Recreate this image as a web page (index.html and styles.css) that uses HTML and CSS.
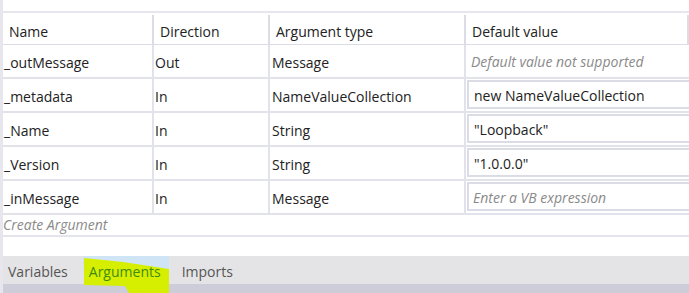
FILE: index.html
```html
<!DOCTYPE html>
<html lang="en">
<head>
  <meta charset="UTF-8">
  <title>Arguments</title>
  <link rel="stylesheet" href="styles.css">
</head>
<body>
  <div class="args-panel">
    <div class="args-top"></div>
    <div class="args-grid">
      <div class="args-head">Name</div>
      <div class="args-head">Direction</div>
      <div class="args-head">Argument type</div>
      <div class="args-head">Default value</div>

      <div class="args-cell">_outMessage</div>
      <div class="args-cell">Out</div>
      <div class="args-cell">Message</div>
      <div class="args-cell args-default"><span class="args-hint">Default value not supported</span></div>

      <div class="args-cell">_metadata</div>
      <div class="args-cell">In</div>
      <div class="args-cell">NameValueCollection</div>
      <div class="args-cell args-default"><div class="args-input">new NameValueCollection</div></div>

      <div class="args-cell">_Name</div>
      <div class="args-cell">In</div>
      <div class="args-cell">String</div>
      <div class="args-cell args-default"><div class="args-input">"Loopback"</div></div>

      <div class="args-cell">_Version</div>
      <div class="args-cell">In</div>
      <div class="args-cell">String</div>
      <div class="args-cell args-default"><div class="args-input">"1.0.0.0"</div></div>

      <div class="args-cell">_inMessage</div>
      <div class="args-cell">In</div>
      <div class="args-cell">Message</div>
      <div class="args-cell args-default"><div class="args-input args-hint">Enter a VB expression</div></div>
    </div>
    <div class="args-create">Create Argument</div>
    <div class="args-space"></div>
    <div class="args-tabs">
      <div class="args-tab">Variables</div>
      <div class="args-tab args-tab-active">
        <svg class="args-marker" width="90" height="37" viewBox="0 0 90 37">
          <rect x="0" y="0" width="86" height="14" fill="#cfe5f6"/>
          <polygon points="1,2 40,6 86,13 86,37 46,37 42,30 1,29" fill="#d6ee00"/>
        </svg>
        <span>Arguments</span>
      </div>
      <div class="args-tab">Imports</div>
    </div>
  </div>
</body>
</html>
```

FILE: styles.css
```css
body {
  margin: 0;
  background-color: #ffffff;
  font-family: "Open Sans", "Noto Sans", sans-serif;
  font-size: 14px;
  color: #333;
}

.args-panel {
  width: 689px;
  height: 293px;
  overflow: hidden;
  border-left: 3px solid #e6e6ec;
  box-sizing: border-box;
  display: flex;
  flex-direction: column;
}

.args-top {
  height: 11px;
  border-bottom: 2px solid #e6e6ee;
  margin-bottom: 2px;
  flex-shrink: 0;
}

.args-grid {
  display: grid;
  grid-template-columns: 151px 116px 196px 1fr;
  grid-template-rows: 30px repeat(5, 34px);
}

.args-head {
  display: flex;
  align-items: center;
  padding-left: 6px;
  padding-top: 3px;
  border-right: 2px solid #dcdce4;
  border-bottom: 1px solid #dcdce4;
  color: #222;
}

.args-cell {
  display: flex;
  align-items: center;
  padding-left: 1px;
  padding-top: 2px;
  border-right: 2px solid #e2e2ea;
  border-bottom: 2px solid #e2e2ea;
  color: #222;
}

.args-cell:nth-child(4n+3) {
  padding-left: 2px;
}

.args-default {
  align-items: stretch;
  padding: 1px 0 2px 1px;
  border-right: none;
}

.args-default > .args-hint {
  display: flex;
  align-items: center;
  padding-left: 4px;
  padding-top: 2px;
}

.args-input {
  flex: 1;
  display: flex;
  align-items: center;
  padding-left: 5px;
  padding-top: 1px;
  border: 2px solid #dcdce6;
  border-right: none;
}

.args-hint {
  font-style: italic;
  color: #8a8a8a;
}

.args-create {
  height: 20px;
  line-height: 20px;
  font-style: italic;
  color: #8a8a8a;
  border-bottom: 2px solid #e4e4ec;
  flex-shrink: 0;
}

.args-space {
  height: 19px;
  flex-shrink: 0;
}

.args-tabs {
  display: flex;
  align-items: stretch;
  height: 28px;
  background-color: #e4e4e6;
  border-bottom: 9px solid #cccdd8;
  flex-shrink: 0;
}

.args-tab {
  display: flex;
  align-items: center;
  padding: 2px 8px 0 5px;
  color: #555;
  position: relative;
}

.args-tab-active {
  margin-left: 7px;
  padding-left: 6px;
  padding-right: 16px;
  color: #3f8c12;
}

.args-tab-active span {
  position: relative;
}

.args-marker {
  position: absolute;
  left: 0;
  top: 0;
}
```
